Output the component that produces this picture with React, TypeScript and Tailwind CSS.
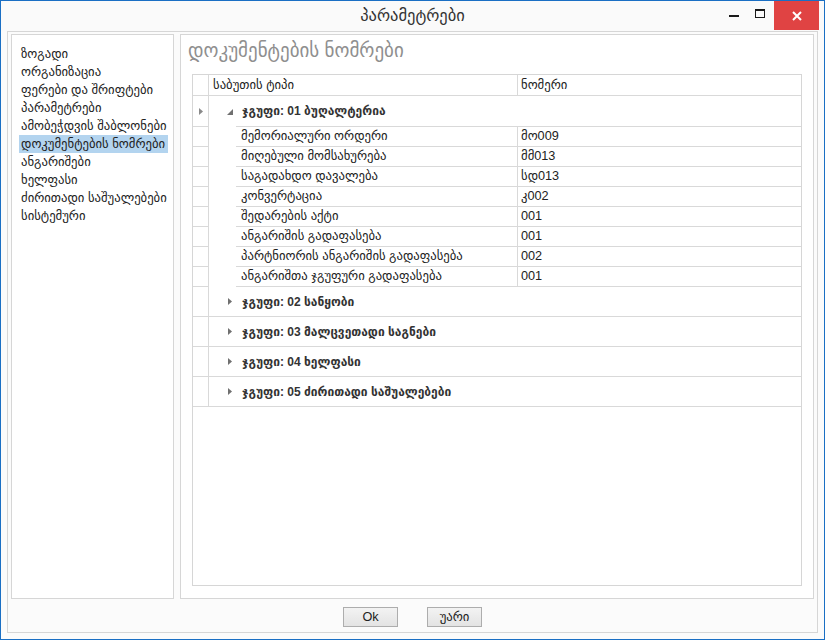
import React from "react";

const FONT = "font-['Liberation_Sans','DejaVu_Sans',sans-serif]";

const navItems = [
  "ზოგადი",
  "ორგანიზაცია",
  "ფერები და შრიფტები",
  "პარამეტრები",
  "ამობეჭდვის შაბლონები",
  "დოკუმენტების ნომრები",
  "ანგარიშები",
  "ხელფასი",
  "ძირითადი საშუალებები",
  "სისტემური",
];

const details: [string, string][] = [
  ["მემორიალური ორდერი", "მო009"],
  ["მიღებული მომსახურება", "მმ013"],
  ["საგადახდო დავალება", "სდ013"],
  ["კონვერტაცია", "კ002"],
  ["შედარების აქტი", "001"],
  ["ანგარიშის გადაფასება", "001"],
  ["პარტნიორის ანგარიშის გადაფასება", "002"],
  ["ანგარიშთა ჯგუფური გადაფასება", "001"],
];

const groups = [
  "ჯგუფი: 02 სანყობი",
  "ჯგუფი: 03 მალცვეთადი საგნები",
  "ჯგუფი: 04 ხელფასი",
  "ჯგუფი: 05 ძირითადი საშუალებები",
];

function RightTri({ color = "#707070" }: { color?: string }) {
  return (
    <svg width="4" height="7" viewBox="0 0 4 7" className="block">
      <path d="M0 0 L4 3.5 L0 7 Z" fill={color} />
    </svg>
  );
}

function DownTri() {
  return (
    <svg width="6" height="6" viewBox="0 0 6 6" className="block">
      <path d="M6 0 L6 6 L0 6 Z" fill="#707070" />
    </svg>
  );
}

function IndCell({ h, children }: { h: string; children?: React.ReactNode }) {
  return (
    <div className={`w-[16px] ${h} border-r border-b border-[#d9d9d9] flex items-center justify-center shrink-0`}>
      {children}
    </div>
  );
}

export default function App() {
  return (
    <div className={`w-[825px] h-[640px] border border-[#1a6fc4] bg-[#fbfbfb] flex flex-col ${FONT} text-[#222]`}>
      {/* Title bar */}
      <div className="relative h-[30px] flex items-center justify-center bg-[#fafafa]">
        <span className="text-[16.5px] text-[#333] font-['DejaVu_Sans',sans-serif]">პარამეტრები</span>
        <div className="absolute right-[5px] top-0 flex items-start">
          <div className="w-[26px] h-[29px] flex items-center justify-center">
            <div className="w-[10px] h-[2px] bg-[#1a1a1a] mt-[1px]" />
          </div>
          <div className="w-[26px] h-[29px] flex items-center justify-center">
            <div className="w-[10px] h-[9px] border border-t-2 border-[#1a1a1a] -mt-[4px]" />
          </div>
          <div className="w-[45px] h-[29px] bg-[#e04343] flex items-center justify-center ml-[1px]">
            <svg width="10" height="10" viewBox="0 0 10 10">
              <path d="M1 1 L9 9 M9 1 L1 9" stroke="#fff" strokeWidth="2" />
            </svg>
          </div>
        </div>
      </div>

      {/* Outer box */}
      <div className="mx-[6px] h-[602px] border border-[#d6d6d6] flex flex-col px-[3px] pt-[2px]">
        <div className="flex gap-[6px] h-[565px]">
          {/* Left nav */}
          <div className="w-[163px] border border-[#d6d6d6] bg-white pt-[10px] pl-[7px]">
            {navItems.map((it, i) => (
              <div
                key={i}
                className={`w-[149px] h-[18px] leading-[18px] pl-[2px] text-[12.7px] whitespace-nowrap ${
                  i === 5 ? "bg-[#b3d4ef]" : ""
                }`}
              >
                {it}
              </div>
            ))}
          </div>

          {/* Right panel */}
          <div className="flex-1 border border-[#d6d6d6] bg-white flex flex-col">
            <div className="h-[39px] pl-[7px] pt-[3px] text-[19px] leading-[26px] text-[#8f8f8f] whitespace-nowrap">
              დოკუმენტების ნომრები
            </div>
            <div className="mx-[11px] mb-[12px] flex-1 border border-[#d6d6d6] bg-white text-[12.7px] text-[#222]">
              {/* header */}
              <div className="flex h-[21px]">
                <IndCell h="h-[21px]" />
                <div className="w-[309px] border-r border-b border-[#d9d9d9] pl-[4px] leading-[20px]">
                  საბუთის ტიპი
                </div>
                <div className="flex-1 border-b border-[#d9d9d9] pl-[3px] leading-[20px]">ნომერი</div>
              </div>
              {/* group 1 */}
              <div className="flex h-[31px]">
                <IndCell h="h-[31px]">
                  <RightTri color="#8a8a8a" />
                </IndCell>
                <div className="w-[27px] flex items-center pl-[18px] shrink-0">
                  <DownTri />
                </div>
                <div className="flex-1 border-b border-[#d9d9d9] pl-[6px] flex items-center font-bold text-[12px] text-[#333]">
                  ჯგუფი: 01 ბუღალტერია
                </div>
              </div>
              {details.map(([a, b], i) => (
                <div key={i} className="flex h-[20px]">
                  <IndCell h="h-[20px]" />
                  <div className="w-[27px] shrink-0" />
                  <div className="w-[282px] border-r border-b border-[#d9d9d9] pl-[5px] leading-[19px] whitespace-nowrap">
                    {a}
                  </div>
                  <div className="flex-1 border-b border-[#d9d9d9] pl-[3px] leading-[19px]">{b}</div>
                </div>
              ))}
              {groups.map((g, i) => (
                <div key={i} className="flex h-[30px]">
                  <IndCell h="h-[30px]" />
                  <div className="flex-1 border-b border-[#d9d9d9] flex items-center pl-[19px]">
                    <RightTri />
                    <span className="ml-[10px] font-bold text-[12px] text-[#333]">{g}</span>
                  </div>
                </div>
              ))}
            </div>
          </div>
        </div>

        {/* Buttons */}
        <div className="mt-[8px] flex justify-center gap-[29px]">
          <button className="w-[55px] h-[20px] border border-[#adadad] bg-gradient-to-b from-[#f3f3f3] to-[#e3e3e3] text-[12.7px] leading-[18px] text-[#222]">
            Ok
          </button>
          <button className="w-[55px] h-[20px] border border-[#adadad] bg-gradient-to-b from-[#f3f3f3] to-[#e3e3e3] text-[12.7px] leading-[18px] text-[#222]">
            უარი
          </button>
        </div>
      </div>
    </div>
  );
}
